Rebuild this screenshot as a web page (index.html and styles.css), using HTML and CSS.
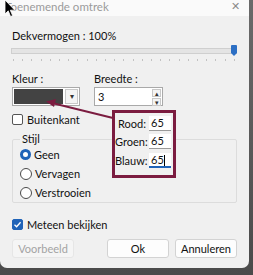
FILE: index.html
```html
<!DOCTYPE html>
<html lang="nl">
<head>
  <meta charset="UTF-8" />
  <title>Toenemende omtrek</title>
  <link rel="stylesheet" href="styles.css">
</head>
<body>
  <div class="screen">
    <div class="dialog">
      <div class="titlebar">
        <span class="title">Toenemende omtrek</span>
        <span class="close">✕</span>
      </div>

      <div class="content">
        <div class="label">Dekvermogen : 100%</div>
        <div class="slider">
          <div class="track"></div>
          <div class="thumb"></div>
        </div>
        <div class="ticks"></div>

        <div class="row">
          <div class="field">
            <div class="label">Kleur :</div>
            <div class="combo">
              <div class="swatch"></div>
              <div class="drop">▾</div>
            </div>
          </div>
          <div class="field">
            <div class="label">Breedte :</div>
            <div class="spin">
              <span class="value">3</span>
              <div class="spinbtns">
                <span class="spinbtn">▴</span>
                <span class="spinbtn">▾</span>
              </div>
            </div>
          </div>
        </div>

        <div class="check"><span class="box"></span>Buitenkant</div>

        <fieldset class="group">
          <legend>Stijl</legend>
          <div class="radio selected"><span class="dot"></span>Geen</div>
          <div class="radio"><span class="dot"></span>Vervagen</div>
          <div class="radio"><span class="dot"></span>Verstrooien</div>
        </fieldset>

        <div class="check checked">
          <span class="box">
            <svg width="9" height="9" viewBox="0 0 9 9"><path d="M1.5 4.8 L3.6 6.8 L7.6 2.2" fill="none" stroke="#fff" stroke-width="1.3"/></svg>
          </span>Meteen bekijken
        </div>

        <div class="buttons">
          <button class="btn disabled">Voorbeeld</button>
          <span class="spacer"></span>
          <button class="btn">Ok</button>
          <button class="btn">Annuleren</button>
        </div>
      </div>
    </div>

    <!-- annotation drawn over the dialog -->
    <svg class="arrow" width="253" height="275" viewBox="0 0 253 275">
      <line x1="113" y1="118" x2="54" y2="103.5" stroke="#7b1c40" stroke-width="2"/>
      <polygon points="46,101.5 56,99 54,107" fill="#7b1c40"/>
    </svg>

    <div class="callout">
      <div class="rgb"><span class="name">Rood:</span><span class="num">65</span></div>
      <div class="rgb"><span class="name">Groen:</span><span class="num">65</span></div>
      <div class="rgb"><span class="name">Blauw:</span><span class="num focus">65<i class="caret"></i></span></div>
    </div>

    <svg class="cursor" width="12" height="18" viewBox="0 0 12 18">
      <path d="M1 0 L1 14 L4.2 10.8 L6.6 16.5 L8.6 15.6 L6.3 10.2 L10.8 10.2 Z" fill="#000" stroke="#fff" stroke-width="0.8"/>
    </svg>
  </div>
</body>
</html>
```

FILE: styles.css
```css
body {
  margin: 0;
  background: #5e5e5e;
  font-family: Lato, "Noto Sans", sans-serif;
  font-size: 11px;
  color: #111;
}

.screen {
  position: relative;
  width: 253px;
  height: 275px;
  overflow: hidden;
  background: linear-gradient(#6a6a6a, #4a4a4a);
}

.dialog {
  width: 249px;
  height: 268px;
  background: #f0f0f0;
  border-radius: 0 0 7px 7px;
  overflow: hidden;
}

.titlebar {
  height: 16px;
  background: #fafafa;
  display: flex;
  justify-content: space-between;
  align-items: flex-start;
  padding: 0 9px 0 5px;
}

.title {
  color: #9a9a9a;
  font-size: 11.5px;
  line-height: 13px;
}

.close {
  color: #8a8a8a;
  font-size: 11px;
  line-height: 12px;
}

.content {
  padding: 12px 12px 0 12px;
}

.label {
  line-height: 16px;
  height: 16px;
}

.slider {
  position: relative;
  height: 12px;
  margin-top: 1px;
}

.track {
  position: absolute;
  left: -1px;
  right: 0;
  top: 3px;
  height: 4px;
  background: #e4e4e4;
  border: 1px solid #cfcfcf;
}

.thumb {
  position: absolute;
  right: 0;
  top: 0;
  width: 6px;
  height: 8px;
  background: #2c6fc4;
  border-radius: 1px 1px 0 0;
}

.thumb::after {
  content: "";
  position: absolute;
  left: 0;
  top: 8px;
  border-left: 3px solid transparent;
  border-right: 3px solid transparent;
  border-top: 3px solid #2c6fc4;
}

.ticks {
  height: 2px;
  margin-top: 2px;
  margin-left: 1px;
  background: repeating-linear-gradient(90deg, #c2c2c2 0 1px, transparent 1px 9.2px);
}

.row {
  display: flex;
  gap: 14px;
  margin-top: 10px;
}

.combo {
  width: 64px;
  height: 15px;
  border: 1px solid #a9a9a9;
  background: #fff;
  display: flex;
  padding: 1px;
  gap: 2px;
}

.swatch {
  flex: 1;
  background: #434343;
}

.drop {
  width: 11px;
  border: 1px solid #c8c8c8;
  background: #f4f4f4;
  font-size: 8px;
  line-height: 13px;
  text-align: center;
  color: #333;
}

.spin {
  width: 65px;
  height: 15px;
  border: 1px solid #a9a9a9;
  background: #fff;
  display: flex;
  justify-content: space-between;
  padding: 1px;
}

.value {
  padding-left: 2px;
  line-height: 15px;
}

.spinbtns {
  display: flex;
  flex-direction: column;
  gap: 1px;
}

.spinbtn {
  width: 7px;
  height: 6px;
  border: 1px solid #c8c8c8;
  background: #f4f4f4;
  font-size: 7px;
  line-height: 6px;
  text-align: center;
  color: #333;
}

.check {
  display: flex;
  align-items: center;
  gap: 4px;
  height: 16px;
  margin-top: 5px;
}

.check .box {
  width: 9px;
  height: 9px;
  border: 1px solid #555;
  border-radius: 2px;
  background: #fff;
  display: flex;
  align-items: center;
  justify-content: center;
}

.check.checked .box {
  background: #1f63b8;
  border-color: #1f63b8;
}

.group {
  margin: 6px 0 0 0;
  padding: 0 0 0 7px;
  border: 1px solid #dcdcdc;
  border-radius: 2px;
}

.group legend {
  padding: 0 2px;
  margin-left: 0;
  line-height: 12px;
}

.radio {
  display: flex;
  align-items: center;
  gap: 3px;
  height: 19px;
}

.radio .dot {
  width: 10px;
  height: 10px;
  border: 1px solid #4a4a4a;
  border-radius: 50%;
  background: #fff;
}

.radio.selected .dot {
  border: 3.5px solid #1f63b8;
  width: 5px;
  height: 5px;
}

.checked {
  margin-top: 13px;
}

.buttons {
  display: flex;
  gap: 6px;
  margin-top: 7px;
}

.spacer {
  flex: 1;
}

.btn {
  width: 62px;
  height: 19px;
  font-family: inherit;
  font-size: 11px;
  padding: 0;
  color: #111;
  background: #fdfdfd;
  border: 1px solid #d3d3d3;
  border-radius: 3px;
}

.btn.disabled {
  background: #f5f5f5;
  border-color: #e6e6e6;
  color: #a3a3a3;
}

.arrow {
  position: absolute;
  left: 0;
  top: 0;
}

.callout {
  position: absolute;
  left: 112px;
  top: 110px;
  width: 58px;
  height: 61px;
  border: 3px solid #7b1c40;
  background: #f0f0f0;
  padding: 1px 0 0 0;
  font-size: 11px;
}

.rgb {
  display: flex;
  align-items: center;
  height: 18.5px;
  gap: 3px;
}

.name {
  width: 31px;
  text-align: right;
}

.num {
  width: 20px;
  height: 14px;
  line-height: 14px;
  padding-left: 2px;
  background: #fff;
  border-bottom: 1px solid #9a9a9a;
}

.num.focus {
  border-bottom: 2px solid #1f63b8;
  height: 13px;
}

.caret {
  display: inline-block;
  width: 1px;
  height: 11px;
  background: #000;
  vertical-align: -2px;
}

.cursor {
  position: absolute;
  left: 4px;
  top: 0;
}
```
